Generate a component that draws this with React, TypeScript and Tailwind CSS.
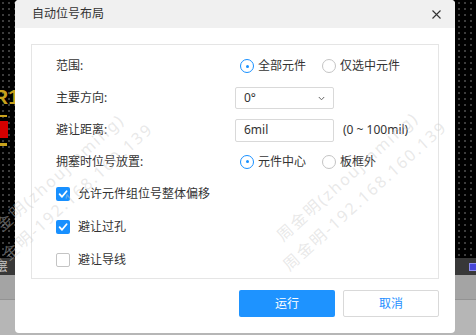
import React from 'react';

function Radio({ checked, label }: { checked?: boolean; label: string }) {
    return (
        <div className="flex items-center w-[82px]">
            <span
                className={`flex items-center justify-center w-[14px] h-[14px] rounded-full border bg-white ${
                    checked ? 'border-[#1890ff]' : 'border-[#c4c4c4]'
                }`}
            >
                {checked && <span className="w-[3px] h-[3px] rounded-full bg-[#1890ff]" />}
            </span>
            <span className="ml-[4px] whitespace-nowrap">{label}</span>
        </div>
    );
}

function Checkbox({ checked, label }: { checked?: boolean; label: string }) {
    return (
        <div className="flex items-center h-[33px]">
            {checked ? (
                <span className="flex items-center justify-center w-[14px] h-[14px] rounded-[2px] bg-[#1890ff]">
                    <svg width="10" height="10" viewBox="0 0 10 10" fill="none">
                        <path d="M1.6 5.2 L4 7.8 L8.6 2.2" stroke="white" strokeWidth="1.8" strokeLinecap="round" strokeLinejoin="round" />
                    </svg>
                </span>
            ) : (
                <span className="w-[14px] h-[14px] rounded-[2px] border border-[#c4c4c4] bg-white" />
            )}
            <span className="ml-[8px]">{label}</span>
        </div>
    );
}

function Row({ label, h = 'h-[32px]', children }: { label: string; h?: string; children: React.ReactNode }) {
    return (
        <div className={`flex items-center ${h}`}>
            <div className="w-[179px]">{label}</div>
            <div className="flex items-center">{children}</div>
        </div>
    );
}

function Watermark({ x, y }: { x: number; y: number }) {
    return (
        <div
            className="absolute -translate-x-1/2 -translate-y-1/2 rotate-[-42deg] whitespace-nowrap text-center text-[16px] tracking-[2px] leading-[26px] text-[rgba(205,205,205,0.45)] pointer-events-none"
            style={{ left: x, top: y }}
        >
            <div>周金明(zhoujinming)</div>
            <div>周金明-192.168.160.139</div>
        </div>
    );
}

export default function App() {
    return (
        <div className="relative w-[476px] h-[335px] overflow-hidden font-['Noto_Sans','Noto_Sans_CJK_SC',sans-serif] text-[12px] text-[#333]">
            {/* editor behind the modal */}
            <div className="flex flex-col h-full">
                <div className="relative h-[258px] bg-black bg-[radial-gradient(circle,#3c3c3c_0.8px,transparent_1.2px)] bg-[length:6px_6px]">
                    <div className="absolute left-[-7px] top-[84px] text-[21px] font-bold leading-[26px] text-[#c9a21c] font-['Liberation_Sans',sans-serif]">R12</div>
                    <div className="absolute left-0 top-[115px] w-[7px] h-[2px] bg-[#c9a21c]" />
                    <div className="absolute left-0 top-[121px] w-[8px] h-[17px] bg-[#d40000]" />
                    <div className="absolute left-0 top-[143px] w-[7px] h-[3px] bg-[#c9a21c]" />
                </div>
                <div className="flex items-center h-[17px] bg-[#383838]">
                    <span className="ml-[-4px] text-[12px] leading-none text-[#c8c8c8]">层</span>
                    <span className="ml-auto mr-[-1px] w-[8px] h-[8px] bg-[#4646d8] border border-[#8c8cf0]" />
                </div>
                <div className="h-[25px] bg-[#a4a4a4] border-b border-[#939393]" />
                <div className="flex-1 bg-[#b6b6b6]" />
            </div>

            {/* modal */}
            <div className="absolute left-[15px] top-0 w-[440px] h-[333px] bg-white rounded-[4px] flex flex-col">
                <div className="flex items-center justify-between h-[28px] bg-[#f0f0f0] rounded-t-[4px] pl-[17px] pr-[14px]">
                    <span className="text-[12px] text-[#333]">自动位号布局</span>
                    <svg width="9" height="9" viewBox="0 0 9 9" fill="none">
                        <path d="M0.5 0.5 L8.5 8.5 M8.5 0.5 L0.5 8.5" stroke="#333" strokeWidth="1.1" />
                    </svg>
                </div>
                <div className="px-[16px] pt-[16px]">
                    <div className="h-[235px] border border-[#e5e5e5] pl-[24px] pt-[5px]">
                        <Row label="范围:">
                            <div className="flex items-center ml-[5px]">
                                <Radio checked label="全部元件" />
                                <Radio label="仅选中元件" />
                            </div>
                        </Row>
                        <Row label="主要方向:">
                            <div className="flex items-center justify-between w-[99px] h-[22px] border border-[#d9d9d9] rounded-[2px] pl-[8px] pr-[8px]">
                                <span>0°</span>
                                <svg width="7" height="5" viewBox="0 0 7 5" fill="none">
                                    <path d="M0.8 1 L3.5 3.8 L6.2 1" stroke="#666" strokeWidth="1" />
                                </svg>
                            </div>
                        </Row>
                        <Row label="避让距离:">
                            <div className="flex items-center w-[99px] h-[23px] border border-[#d9d9d9] rounded-[2px] pl-[8px]">6mil</div>
                            <span className="ml-[9px]">(0 ~ 100mil)</span>
                        </Row>
                        <Row label="拥塞时位号放置:" h="h-[31px]">
                            <div className="flex items-center ml-[5px]">
                                <Radio checked label="元件中心" />
                                <Radio label="板框外" />
                            </div>
                        </Row>
                        <Checkbox checked label="允许元件组位号整体偏移" />
                        <Checkbox checked label="避让过孔" />
                        <Checkbox label="避让导线" />
                    </div>
                    <div className="flex justify-end gap-[8px] mt-[11px]">
                        <button className="w-[96px] h-[27px] rounded-[2px] bg-[#1e93ff] text-white text-[12px]">运行</button>
                        <button className="w-[96px] h-[27px] rounded-[2px] border border-[#d9d9d9] bg-white text-[#1e8fff] text-[12px]">取消</button>
                    </div>
                </div>
            </div>

            <Watermark x={62} y={188} />
            <Watermark x={356} y={186} />
        </div>
    );
}
